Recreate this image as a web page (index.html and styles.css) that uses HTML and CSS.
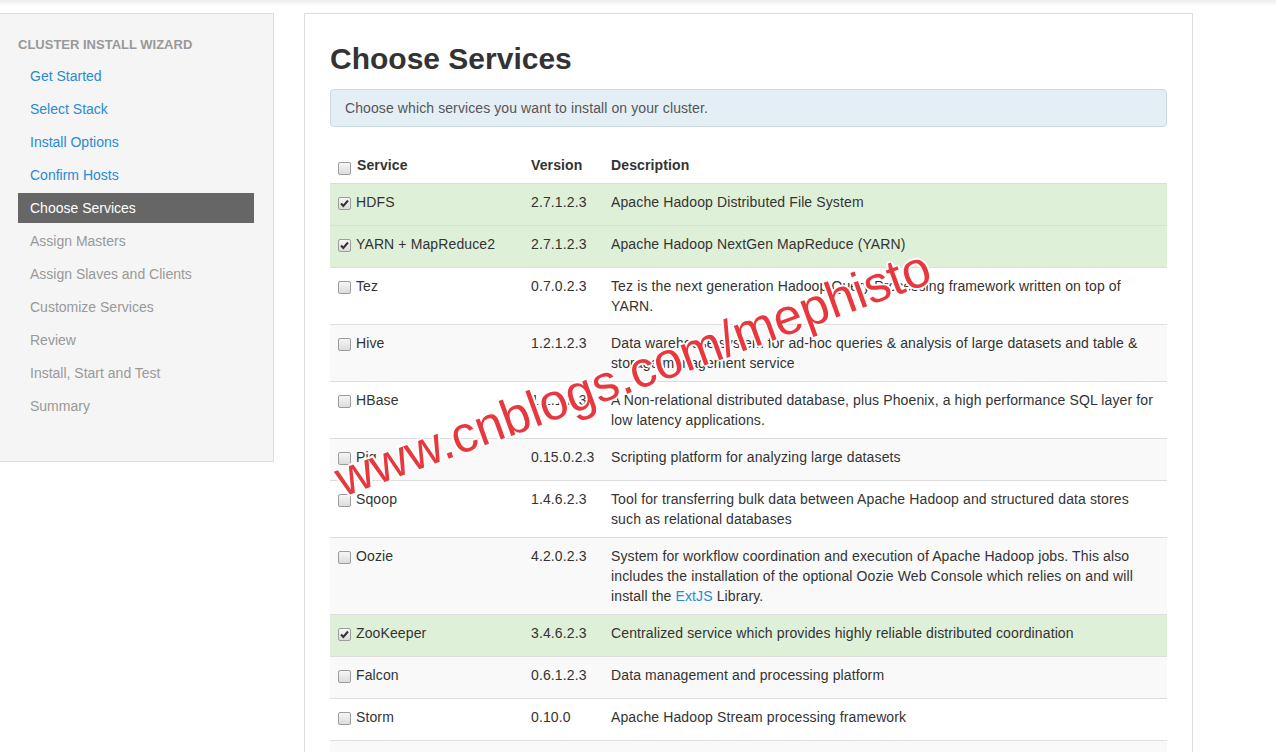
FILE: index.html
```html
<!DOCTYPE html>
<html lang="en">
<head>
  <meta charset="UTF-8">
  <title>Ambari - Choose Services</title>
  <link rel="stylesheet" href="styles.css">
</head>
<body>
  <div class="topbar"></div>

  <div class="wizard">
    <div class="sidebar">
      <div class="nav-header">Cluster Install Wizard</div>
      <ul class="steps">
        <li><a href="#">Get Started</a></li>
        <li><a href="#">Select Stack</a></li>
        <li><a href="#">Install Options</a></li>
        <li><a href="#">Confirm Hosts</a></li>
        <li class="active"><a href="#">Choose Services</a></li>
        <li class="disabled"><a>Assign Masters</a></li>
        <li class="disabled"><a>Assign Slaves and Clients</a></li>
        <li class="disabled"><a>Customize Services</a></li>
        <li class="disabled"><a>Review</a></li>
        <li class="disabled"><a>Install, Start and Test</a></li>
        <li class="disabled"><a>Summary</a></li>
      </ul>
    </div>

    <div class="content">
      <h1>Choose Services</h1>
      <div class="alert">Choose which services you want to install on your cluster.</div>

      <table class="services">
        <colgroup>
          <col class="col-service">
          <col class="col-version">
          <col>
        </colgroup>
        <thead>
          <tr>
            <th><span class="head-check"><span class="cb"></span>Service</span></th>
            <th>Version</th>
            <th>Description</th>
          </tr>
        </thead>
        <tbody>
          <tr class="selected">
            <td><label class="svc"><span class="cb"><svg viewBox="0 0 11 11"><path d="M2 5.5 L4.3 8 L9 2.5" /></svg></span>HDFS</label></td>
            <td>2.7.1.2.3</td>
            <td>Apache Hadoop Distributed File System</td>
          </tr>
          <tr class="selected">
            <td><label class="svc"><span class="cb"><svg viewBox="0 0 11 11"><path d="M2 5.5 L4.3 8 L9 2.5" /></svg></span>YARN + MapReduce2</label></td>
            <td>2.7.1.2.3</td>
            <td>Apache Hadoop NextGen MapReduce (YARN)</td>
          </tr>
          <tr>
            <td><label class="svc"><span class="cb"></span>Tez</label></td>
            <td>0.7.0.2.3</td>
            <td>Tez is the next generation Hadoop Query Processing framework written on top of YARN.</td>
          </tr>
          <tr>
            <td><label class="svc"><span class="cb"></span>Hive</label></td>
            <td>1.2.1.2.3</td>
            <td>Data warehouse system for ad-hoc queries &amp; analysis of large datasets and table &amp; storage management service</td>
          </tr>
          <tr>
            <td><label class="svc"><span class="cb"></span>HBase</label></td>
            <td>1.1.1.2.3</td>
            <td>A Non-relational distributed database, plus Phoenix, a high performance SQL layer for low latency applications.</td>
          </tr>
          <tr>
            <td><label class="svc"><span class="cb"></span>Pig</label></td>
            <td>0.15.0.2.3</td>
            <td>Scripting platform for analyzing large datasets</td>
          </tr>
          <tr>
            <td><label class="svc"><span class="cb"></span>Sqoop</label></td>
            <td>1.4.6.2.3</td>
            <td>Tool for transferring bulk data between Apache Hadoop and structured data stores such as relational databases</td>
          </tr>
          <tr>
            <td><label class="svc"><span class="cb"></span>Oozie</label></td>
            <td>4.2.0.2.3</td>
            <td>System for workflow coordination and execution of Apache Hadoop jobs. This also includes the installation of the optional Oozie Web Console which relies on and will install the <a href="#">ExtJS</a> Library.</td>
          </tr>
          <tr class="selected">
            <td><label class="svc"><span class="cb"><svg viewBox="0 0 11 11"><path d="M2 5.5 L4.3 8 L9 2.5" /></svg></span>ZooKeeper</label></td>
            <td>3.4.6.2.3</td>
            <td>Centralized service which provides highly reliable distributed coordination</td>
          </tr>
          <tr>
            <td><label class="svc"><span class="cb"></span>Falcon</label></td>
            <td>0.6.1.2.3</td>
            <td>Data management and processing platform</td>
          </tr>
          <tr>
            <td><label class="svc"><span class="cb"></span>Storm</label></td>
            <td>0.10.0</td>
            <td>Apache Hadoop Stream processing framework</td>
          </tr>
          <tr>
            <td><label class="svc"><span class="cb"></span>Flume</label></td>
            <td>1.5.2.2.3</td>
            <td>A distributed service for collecting, aggregating, and moving large amounts of streaming data into HDFS</td>
          </tr>
        </tbody>
      </table>
    </div>
  </div>

  <div class="watermark">www.cnblogs.com/mephisto</div>
</body>
</html>
```

FILE: styles.css
```css
body {
  margin: 0;
  font-family: "Liberation Sans", Arial, sans-serif;
  font-size: 14px;
  line-height: 20px;
  color: #333;
  background: #fff;
  overflow: hidden;
}
a {
  color: #2a8ad2;
  text-decoration: none;
}
.topbar {
  height: 6px;
  background: linear-gradient(#ececec, #fff);
}
.wizard {
  display: flex;
  align-items: flex-start;
  gap: 30px;
  padding-top: 7px;
}
.sidebar {
  width: 274px;
  box-sizing: border-box;
  padding: 21px 19px 37px 18px;
  background: #f5f5f5;
  border: 1px solid #ddd;
  border-left: none;
}
.nav-header {
  font-size: 13px;
  font-weight: bold;
  color: #999;
  text-transform: uppercase;
  margin-bottom: 6px;
}
.steps {
  list-style: none;
  margin: 0;
  padding: 0;
}
.steps li {
  margin-bottom: 3px;
}
.steps a {
  display: block;
  padding: 5px 12px;
}
.steps .active a {
  background: #666;
  color: #fff;
}
.steps .disabled a {
  color: #999;
}
.content {
  width: 889px;
  min-height: 760px;
  box-sizing: border-box;
  padding: 27px 25px 0;
  border: 1px solid #ddd;
}
h1 {
  margin: 0 0 12px;
  font-size: 30px;
  line-height: 36px;
  font-weight: bold;
}
.alert {
  padding: 8px 14px;
  margin-bottom: 20px;
  background: #e4eff5;
  border: 1px solid #cdd9e1;
  border-radius: 4px;
  color: #555;
  letter-spacing: 0.1px;
}
.services {
  width: 100%;
  table-layout: fixed;
  border-collapse: collapse;
  letter-spacing: 0.12px;
}
.col-service {
  width: 193px;
}
.col-version {
  width: 80px;
}
.services th {
  padding: 8px;
  text-align: left;
  font-weight: bold;
  vertical-align: top;
}
.services td {
  padding: 8px;
  vertical-align: top;
  border-top: 1px solid #ddd;
}
.services tbody tr:nth-child(even) {
  background: #f9f9f9;
}
.services tbody tr.selected {
  background: #dff0d8;
}
.head-check {
  display: flex;
  gap: 6px;
}
.head-check .cb {
  margin-top: 7px;
}
.svc {
  display: flex;
  gap: 5px;
  height: 25px;
}
.svc .cb {
  margin-top: 5px;
}
.cb {
  flex: none;
  width: 11px;
  height: 11px;
  border: 1px solid #9c9c9c;
  border-radius: 2px;
  background: linear-gradient(#f6f6f6, #dcdcdc);
}
.cb svg {
  display: block;
  width: 11px;
  height: 11px;
}
.cb path {
  fill: none;
  stroke: #333;
  stroke-width: 2;
}
.watermark {
  position: absolute;
  left: 343px;
  top: 455px;
  font-size: 51px;
  line-height: 50px;
  color: #e8383d;
  white-space: nowrap;
  transform: rotate(-20deg);
  transform-origin: 0 42px;
  text-shadow: -2px 0 #fff, 2px 0 #fff, 0 -2px #fff, 0 2px #fff,
    -1px -1px #fff, 1px 1px #fff, -1px 1px #fff, 1px -1px #fff;
}
```
